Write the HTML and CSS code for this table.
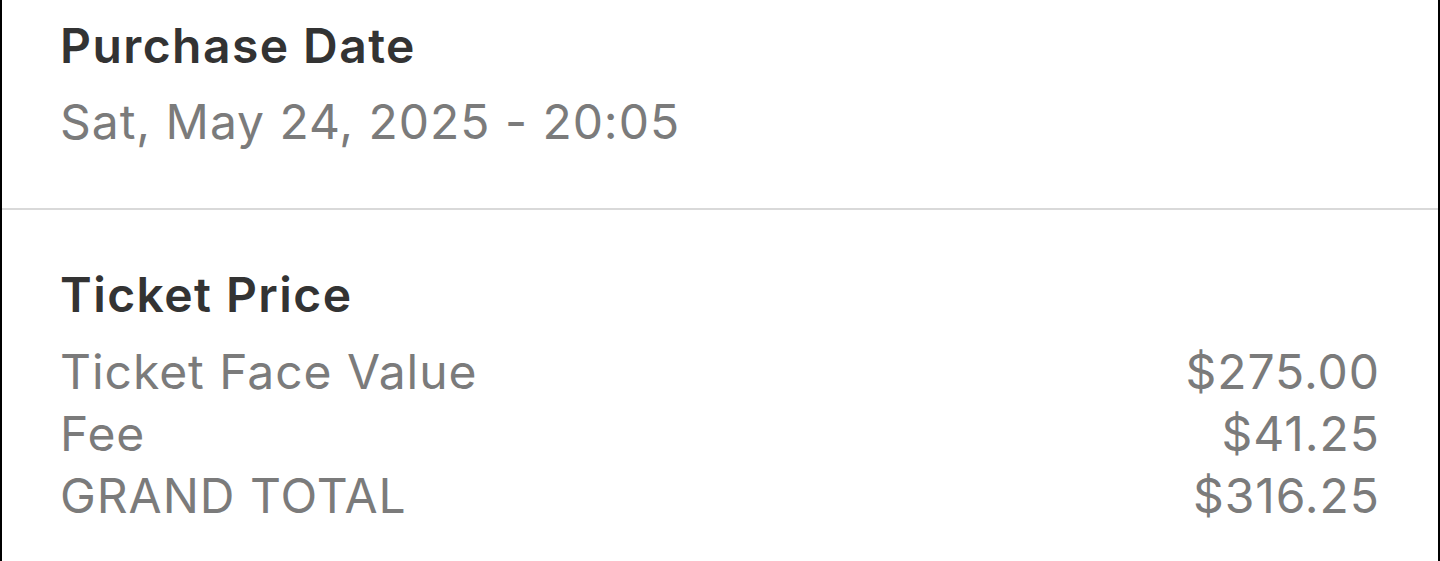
FILE: index.html
```html
<!DOCTYPE html>
<html lang="en">
<head>
    <meta charset="UTF-8">
    <meta name="viewport" content="width=device-width, initial-scale=1.0">
    <title>Order Details</title>
    <link rel="stylesheet" href="styles.css">
</head>
<body>
    <div class="panel">
        <!-- Purchase date -->
        <section class="block block-date">
            <h2 class="block-title">Purchase Date</h2>
            <div class="block-text">Sat, May 24, 2025 - 20:05</div>
        </section>

        <!-- Price breakdown -->
        <section class="block block-price">
            <h2 class="block-title">Ticket Price</h2>
            <div class="price-row">
                <span>Ticket Face Value</span>
                <span>$275.00</span>
            </div>
            <div class="price-row">
                <span>Fee</span>
                <span>$41.25</span>
            </div>
            <div class="price-row">
                <span>GRAND TOTAL</span>
                <span>$316.25</span>
            </div>
        </section>
    </div>
</body>
</html>
```

FILE: styles.css
```css
html, body {
    margin: 0;
    padding: 0;
    background-color: #fff;
}
body {
    font-family: Inter, "Noto Sans", sans-serif;
    color: #7b7b7b;
}
.panel {
    height: 561px;
    border-left: 2px solid #000;
    border-right: 2px solid #000;
    box-sizing: border-box;
    overflow: hidden;
}
.block {
    padding: 0 58px;
}
.block-date {
    padding-top: 16px;
    height: 210px;
    box-sizing: border-box;
    border-bottom: 2px solid #d9d9d9;
}
.block-price {
    padding-top: 55px;
}
.block-title {
    margin: 0;
    font-size: 48px;
    font-weight: 600;
    line-height: 60px;
    letter-spacing: 0.03em;
    color: #333;
}
.block-text {
    margin-top: 16px;
    font-size: 48px;
    line-height: 60px;
    letter-spacing: 0.02em;
}
.block-price .block-title {
    margin-bottom: 16px;
}
.price-row {
    display: flex;
    justify-content: space-between;
    font-size: 48px;
    line-height: 62px;
    letter-spacing: 0.02em;
}
```
